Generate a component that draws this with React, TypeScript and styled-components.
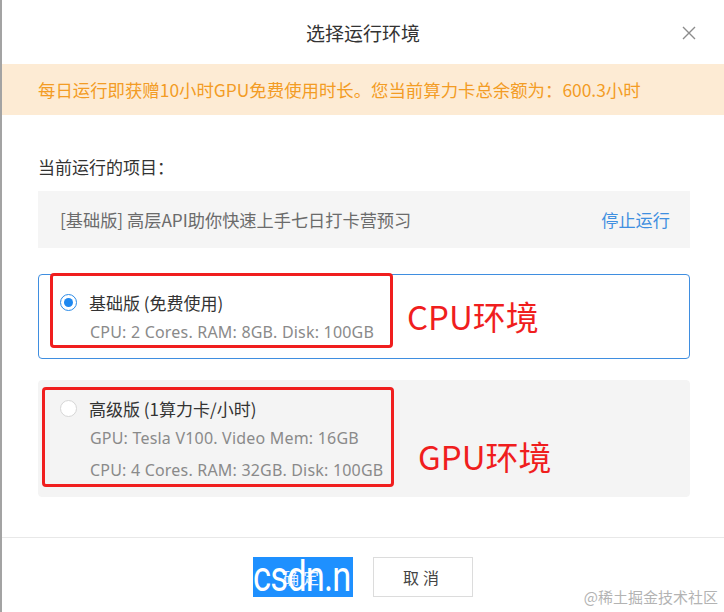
import React from "react";
import styled, { createGlobalStyle } from "styled-components";

const GlobalStyle = createGlobalStyle`
  html, body {
    margin: 0;
    padding: 0;
    background: #fff;
  }
  body {
    font-family: "Noto Sans CJK SC", "Noto Sans", sans-serif;
  }
`;

const Dialog = styled.div`
  position: relative;
  width: 724px;
  height: 612px;
  box-sizing: border-box;
  border-left: 2px solid #a3a3a3;
  display: flex;
  flex-direction: column;
  overflow: hidden;
  background: #fff;
`;

const Header = styled.div`
  position: relative;
  height: 64px;
  display: flex;
  align-items: center;
  justify-content: center;
  font-size: 19px;
  color: #333;
`;

const Close = styled.button`
  position: absolute;
  right: 26px;
  top: 24px;
  width: 18px;
  height: 18px;
  padding: 0;
  border: none;
  background: none;
  display: flex;
  align-items: center;
  justify-content: center;
`;

const Banner = styled.div`
  height: 51px;
  display: flex;
  align-items: center;
  padding-left: 36px;
  background: #fdebd4;
  color: #f39c24;
  font-size: 17.4px;
`;

const Body = styled.div`
  padding: 40px 34px 0 36px;
  display: flex;
  flex-direction: column;
`;

const Label = styled.div`
  font-size: 17px;
  color: #333;
  line-height: 24px;
  height: 24px;
`;

const CurrentBox = styled.div`
  margin-top: 12px;
  height: 57px;
  background: #f5f5f5;
  display: flex;
  align-items: center;
  justify-content: space-between;
  padding: 0 20px 0 22px;
  font-size: 17.2px;
  color: #6b6b6b;
`;

const StopLink = styled.span`
  color: #3f8fe0;
`;

const Option = styled.div<{ $active?: boolean }>`
  position: relative;
  box-sizing: border-box;
  border: 1px solid ${(p) => (p.$active ? "#3f8ee0" : "#f4f4f4")};
  background: ${(p) => (p.$active ? "#fff" : "#f4f4f4")};
  border-radius: 4px;
  padding: 13px 20px 0 21px;
`;

const OptionRow = styled.div`
  display: flex;
  align-items: center;
  gap: 12px;
  height: 28px;
`;

const Radio = styled.span<{ $checked?: boolean }>`
  width: 17px;
  height: 17px;
  box-sizing: border-box;
  border-radius: 50%;
  background: #fff;
  border: 1px solid ${(p) => (p.$checked ? "#2b8be8" : "#d6d6d6")};
  display: flex;
  align-items: center;
  justify-content: center;
  &::after {
    content: "";
    width: 9px;
    height: 9px;
    border-radius: 50%;
    background: ${(p) => (p.$checked ? "#1e88f0" : "transparent")};
  }
`;

const OptionTitle = styled.span`
  font-size: 17px;
  color: #333;
`;

const Spec = styled.div`
  padding-left: 30px;
  font-family: "Noto Sans", "Noto Sans CJK SC", sans-serif;
  font-size: 16px;
  letter-spacing: 0.2px;
  color: #8a8a8a;
  line-height: 32px;
`;

const Mark = styled.div<{ $left: number; $top: number; $w: number; $h: number }>`
  position: absolute;
  left: ${(p) => p.$left}px;
  top: ${(p) => p.$top}px;
  width: ${(p) => p.$w}px;
  height: ${(p) => p.$h}px;
  box-sizing: border-box;
  border: 3px solid #f01e1e;
  border-radius: 4px;
`;

const MarkText = styled.div<{ $left: number; $top: number }>`
  position: absolute;
  left: ${(p) => p.$left}px;
  top: ${(p) => p.$top}px;
  line-height: 40px;
  font-size: 33px;
  color: #f01e1e;
  white-space: nowrap;
`;

const Footer = styled.div`
  margin-top: auto;
  border-top: 1px solid #e8e8e8;
  height: 75px;
  display: flex;
  justify-content: center;
  gap: 20px;
  padding-top: 19px;
  box-sizing: border-box;
`;

const Button = styled.button<{ $primary?: boolean }>`
  position: relative;
  overflow: hidden;
  width: 100px;
  height: 40px;
  box-sizing: border-box;
  border: 1px solid ${(p) => (p.$primary ? "#1e90ff" : "#dcdcdc")};
  background: ${(p) => (p.$primary ? "#1e90ff" : "#fff")};
  color: ${(p) => (p.$primary ? "#e8f2ff" : "#444")};
  font-family: "Noto Sans CJK SC", sans-serif;
  font-size: 16px;
  letter-spacing: 4px;
  padding: 0;
`;

const Stamp = styled.span`
  position: absolute;
  left: -1px;
  top: -6px;
  font-family: Roboto, "Liberation Sans", sans-serif;
  font-size: 42px;
  letter-spacing: -1px;
  color: #fff;
  white-space: nowrap;
  transform: scaleX(0.82);
  transform-origin: left center;
`;

const Watermark = styled.div`
  position: absolute;
  right: 6px;
  bottom: 5px;
  font-size: 15px;
  color: #b3b3b3;
`;

export default function App() {
  return (
    <>
      <GlobalStyle />
      <Dialog>
        <Header>
          选择运行环境
          <Close aria-label="close">
            <svg width="14" height="14" viewBox="0 0 14 14">
              <path d="M1 1L13 13M13 1L1 13" stroke="#8c8c8c" strokeWidth="1.4" />
            </svg>
          </Close>
        </Header>
        <Banner>每日运行即获赠10小时GPU免费使用时长。您当前算力卡总余额为：600.3小时</Banner>
        <Body>
          <Label>当前运行的项目：</Label>
          <CurrentBox>
            <span>[基础版] 高层API助你快速上手七日打卡营预习</span>
            <StopLink>停止运行</StopLink>
          </CurrentBox>

          <Option $active style={{ marginTop: 26, height: 85 }}>
            <OptionRow>
              <Radio $checked />
              <OptionTitle>基础版 (免费使用)</OptionTitle>
            </OptionRow>
            <Spec>CPU: 2 Cores. RAM: 8GB. Disk: 100GB</Spec>
            <Mark $left={11} $top={-2} $w={343} $h={75} />
            <MarkText $left={368} $top={21}>CPU环境</MarkText>
          </Option>

          <Option style={{ marginTop: 21, height: 117 }}>
            <OptionRow>
              <Radio />
              <OptionTitle>高级版 (1算力卡/小时)</OptionTitle>
            </OptionRow>
            <Spec>GPU: Tesla V100. Video Mem: 16GB</Spec>
            <Spec>CPU: 4 Cores. RAM: 32GB. Disk: 100GB</Spec>
            <Mark $left={3} $top={6} $w={352} $h={100} />
            <MarkText $left={379} $top={55}>GPU环境</MarkText>
          </Option>
        </Body>
        <Footer>
          <Button $primary>
            确定
            <Stamp>csdn.n</Stamp>
          </Button>
          <Button>取消</Button>
        </Footer>
        <Watermark>@稀土掘金技术社区</Watermark>
      </Dialog>
    </>
  );
}
